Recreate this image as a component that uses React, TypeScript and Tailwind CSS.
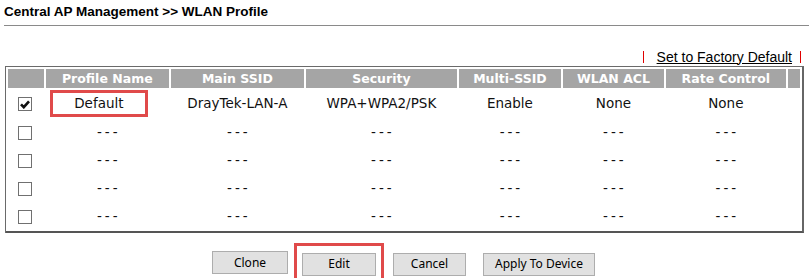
import React from 'react';

const cols = [
  { key: 'chk', label: '', w: 'w-[36px]' },
  { key: 'name', label: 'Profile Name', w: 'w-[123px]' },
  { key: 'ssid', label: 'Main SSID', w: 'w-[134px]' },
  { key: 'sec', label: 'Security', w: 'w-[151px]' },
  { key: 'multi', label: 'Multi-SSID', w: 'w-[103px]' },
  { key: 'acl', label: 'WLAN ACL', w: 'w-[101px]' },
  { key: 'rate', label: 'Rate Control', w: 'w-[121px]' },
  { key: 'pad', label: '', w: 'w-[12px]' },
];

const rows = [
  { checked: true, name: 'Default', ssid: 'DrayTek-LAN-A', sec: 'WPA+WPA2/PSK', multi: 'Enable', acl: 'None', rate: 'None' },
  ...Array.from({ length: 4 }, () => ({
    checked: false,
    name: '---',
    ssid: '---',
    sec: '---',
    multi: '---',
    acl: '---',
    rate: '---',
  })),
];

function Box({ checked }: { checked: boolean }) {
  return (
    <span className="inline-flex h-[14px] w-[14px] items-center justify-center border border-[#707070] bg-white align-middle">
      {checked && (
        <svg width="10" height="9" viewBox="0 0 10 9">
          <path d="M1 4.3 L3.8 7.2 L9 1.4" fill="none" stroke="#111" strokeWidth="2.6" />
        </svg>
      )}
    </span>
  );
}

function Cell({ text }: { text: string }) {
  if (text === '---') {
    return <span className="tracking-[3px] pl-[3px]">---</span>;
  }
  return <>{text}</>;
}

function Btn({ label, w }: { label: string; w: string }) {
  return (
    <button
      type="button"
      className={`h-[23px] ${w} border border-[#adadad] bg-[#e1e1e1] text-[12px] text-black`}
      style={{ fontFamily: '"Noto Sans", "Open Sans", sans-serif' }}
    >
      {label}
    </button>
  );
}

export default function App() {
  return (
    <div className="h-[278px] w-[809px] overflow-hidden bg-white" style={{ fontFamily: '"DejaVu Sans", Verdana, sans-serif' }}>
      <div className="pl-[4px] pt-[4px]">
        <h1
          className="text-[13.5px] font-bold leading-[16px] text-black"
          style={{ fontFamily: '"Liberation Sans", Arial, sans-serif' }}
        >
          Central AP Management &gt;&gt; WLAN Profile
        </h1>
        <div className="mt-[5px] h-px bg-[#8a8a8a]" />
      </div>

      <div
        className="mt-[23px] flex h-[16px] items-center justify-end pr-[8px] text-[14px] text-black"
        style={{ fontFamily: '"Liberation Sans", Arial, sans-serif' }}
      >
        <div className="h-[12px] w-px bg-[#e00000]" />
        <a className="ml-[13px] underline" href="#">Set to Factory Default</a>
        <div className="ml-[8px] h-[12px] w-px bg-[#e00000]" />
      </div>

      <div className="ml-[5px] mt-[1px] w-[799px] border-t border-l border-[#6a6a6a]">
        <div className="border-r-2 border-b-2 border-r-[#666] border-b-[#555]">
          <table className="w-full border-separate border-spacing-x-[2px] border-spacing-y-[2px] text-[13.5px]">
            <thead>
              <tr className="h-[19px]">
                {cols.map((c) => (
                  <th
                    key={c.key}
                    className={`${c.w} bg-[#a5a5a5] p-0 text-center text-[12.5px] font-bold leading-[19px] text-white`}
                  >
                    {c.label}
                  </th>
                ))}
              </tr>
            </thead>
            <tbody>
              {rows.map((r, i) => (
                <tr key={i} className="h-[26px] text-[#111]">
                  <td className="p-0 pl-[10px]">
                    <Box checked={r.checked} />
                  </td>
                  <td className="p-0 text-center">
                    {i === 0 ? (
                      <div className="ml-[4px] flex h-[27px] w-[98px] items-center justify-center border-[3px] border-[#e04a4a]">
                        {r.name}
                      </div>
                    ) : (
                      <Cell text={r.name} />
                    )}
                  </td>
                  <td className="p-0 text-center"><Cell text={r.ssid} /></td>
                  <td className="p-0 text-center"><Cell text={r.sec} /></td>
                  <td className="p-0 text-center"><Cell text={r.multi} /></td>
                  <td className="p-0 text-center"><Cell text={r.acl} /></td>
                  <td className="p-0 text-center"><Cell text={r.rate} /></td>
                  <td className="p-0" />
                </tr>
              ))}
            </tbody>
          </table>
        </div>
      </div>

      <div className="mt-[18px] flex items-start pl-[212px]">
        <Btn label="Clone" w="w-[76px]" />
        <div className="ml-[6px] -mt-[8px] border-[3px] border-b-0 border-[#e04a4a] px-[5px] pt-[5px] pb-[2px]">
          <Btn label="Edit" w="w-[74px]" />
        </div>
        <div className="ml-[9px]">
          <Btn label="Cancel" w="w-[73px]" />
        </div>
        <div className="ml-[17px]">
          <Btn label="Apply To Device" w="w-[112px]" />
        </div>
      </div>
    </div>
  );
}
